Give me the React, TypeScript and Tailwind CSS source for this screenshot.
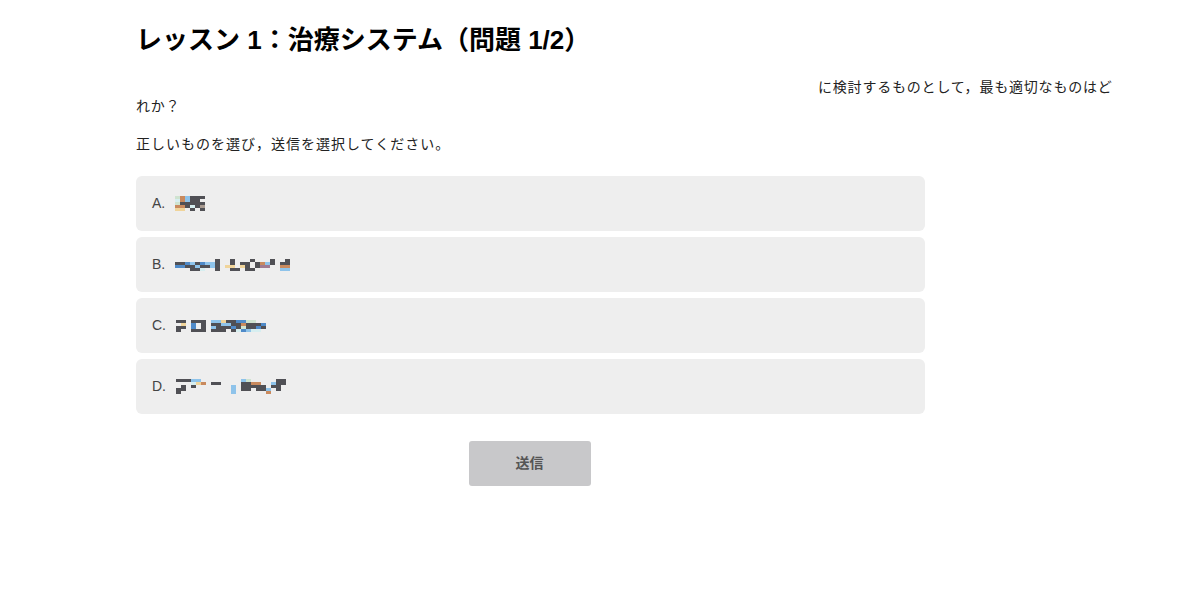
const COLORS: Record<string, string> = {
  k: "#505055",
  b: "#8ec3ea",
  B: "#4f8ac8",
  t: "#c98a5e",
  y: "#f0d49a",
  g: "#cfe3d0",
  c: "#d6eef0",
  p: "#a07a90",
  m: "#a89a90",
};

// redacted answer text, drawn as the pixel mosaic seen in the screenshot
const OPTIONS = [
  { label: "A.", rows: ["gtbkkk", "ctbkk.", "gkkkkk", "ttkckm", "yy.k.k"] },
  {
    rows: [
      "........k..k...k...k..k",
      "kkBbkBbbk..k.kk.ktbk.kk",
      "BBkkbkkbk.yy.yk.kpp..tt",
      "...kkc..k..kk.kk.....bb",
    ],
    label: "B.",
  },
  {
    label: "C.",
    rows: [
      "kk.kkk.bbykkBBgg...",
      ".y.B.k.kkbbkktkkkB.",
      "kk.B.k.bkkkBkgkkBk.",
      "k..kkk.kkk.kcBbcc..",
    ],
  },
  {
    label: "D.",
    rows: [
      "kkkbb........bg.....kk",
      "...cyt.kk....kktt..bkk",
      ".k.k.......b.kkkkk.kk.",
      "kk.........b.kk.kkb.k.",
      "k..........b......t...",
    ],
  },
];

function Mosaic({ rows }: { rows: string[] }) {
  return (
    <div className="flex flex-col">
      {rows.map((row, i) => (
        <div key={i} className="flex">
          {row.split("").map((ch, j) => (
            <span
              key={j}
              className="block h-[3px] w-[5px]"
              style={{ backgroundColor: COLORS[ch] ?? "transparent" }}
            />
          ))}
        </div>
      ))}
    </div>
  );
}

export default function App() {
  return (
    <div className="min-h-[598px] bg-white font-['Liberation_Sans','Noto_Sans_CJK_JP',sans-serif] text-[#222]">
      <div className="w-[976px] pl-[136px] pt-[22px] box-content">
        <h1 className="text-[26px] font-bold leading-[36px] text-black">
          レッスン 1：治療システム（問題 1/2）
        </h1>

        <div className="mt-[20px] text-[14px] leading-[19px] tracking-[0.8px]">
          <p className="whitespace-nowrap pl-[682px]">に検討するものとして，最も適切なものはど</p>
          <p>れか？</p>
        </div>

        <p className="mt-[19px] text-[14px] leading-[19px] tracking-[1px]">
          正しいものを選び，送信を選択してください。
        </p>

        <div className="mt-[22px] flex w-[789px] flex-col gap-[6px]">
          {OPTIONS.map((opt) => (
            <div
              key={opt.label}
              className="flex h-[55px] items-center gap-[10px] rounded-[6px] bg-[#eeeeee] pl-[16px]"
            >
              <span className="text-[14px] text-[#444]">{opt.label}</span>
              <Mosaic rows={opt.rows} />
            </div>
          ))}
        </div>

        <div className="mt-[27px] flex w-[787px] justify-center">
          <button className="h-[45px] w-[122px] rounded-[3px] bg-[#c8c8ca] text-[14px] font-bold text-[#555]">
            送信
          </button>
        </div>
      </div>
    </div>
  );
}
